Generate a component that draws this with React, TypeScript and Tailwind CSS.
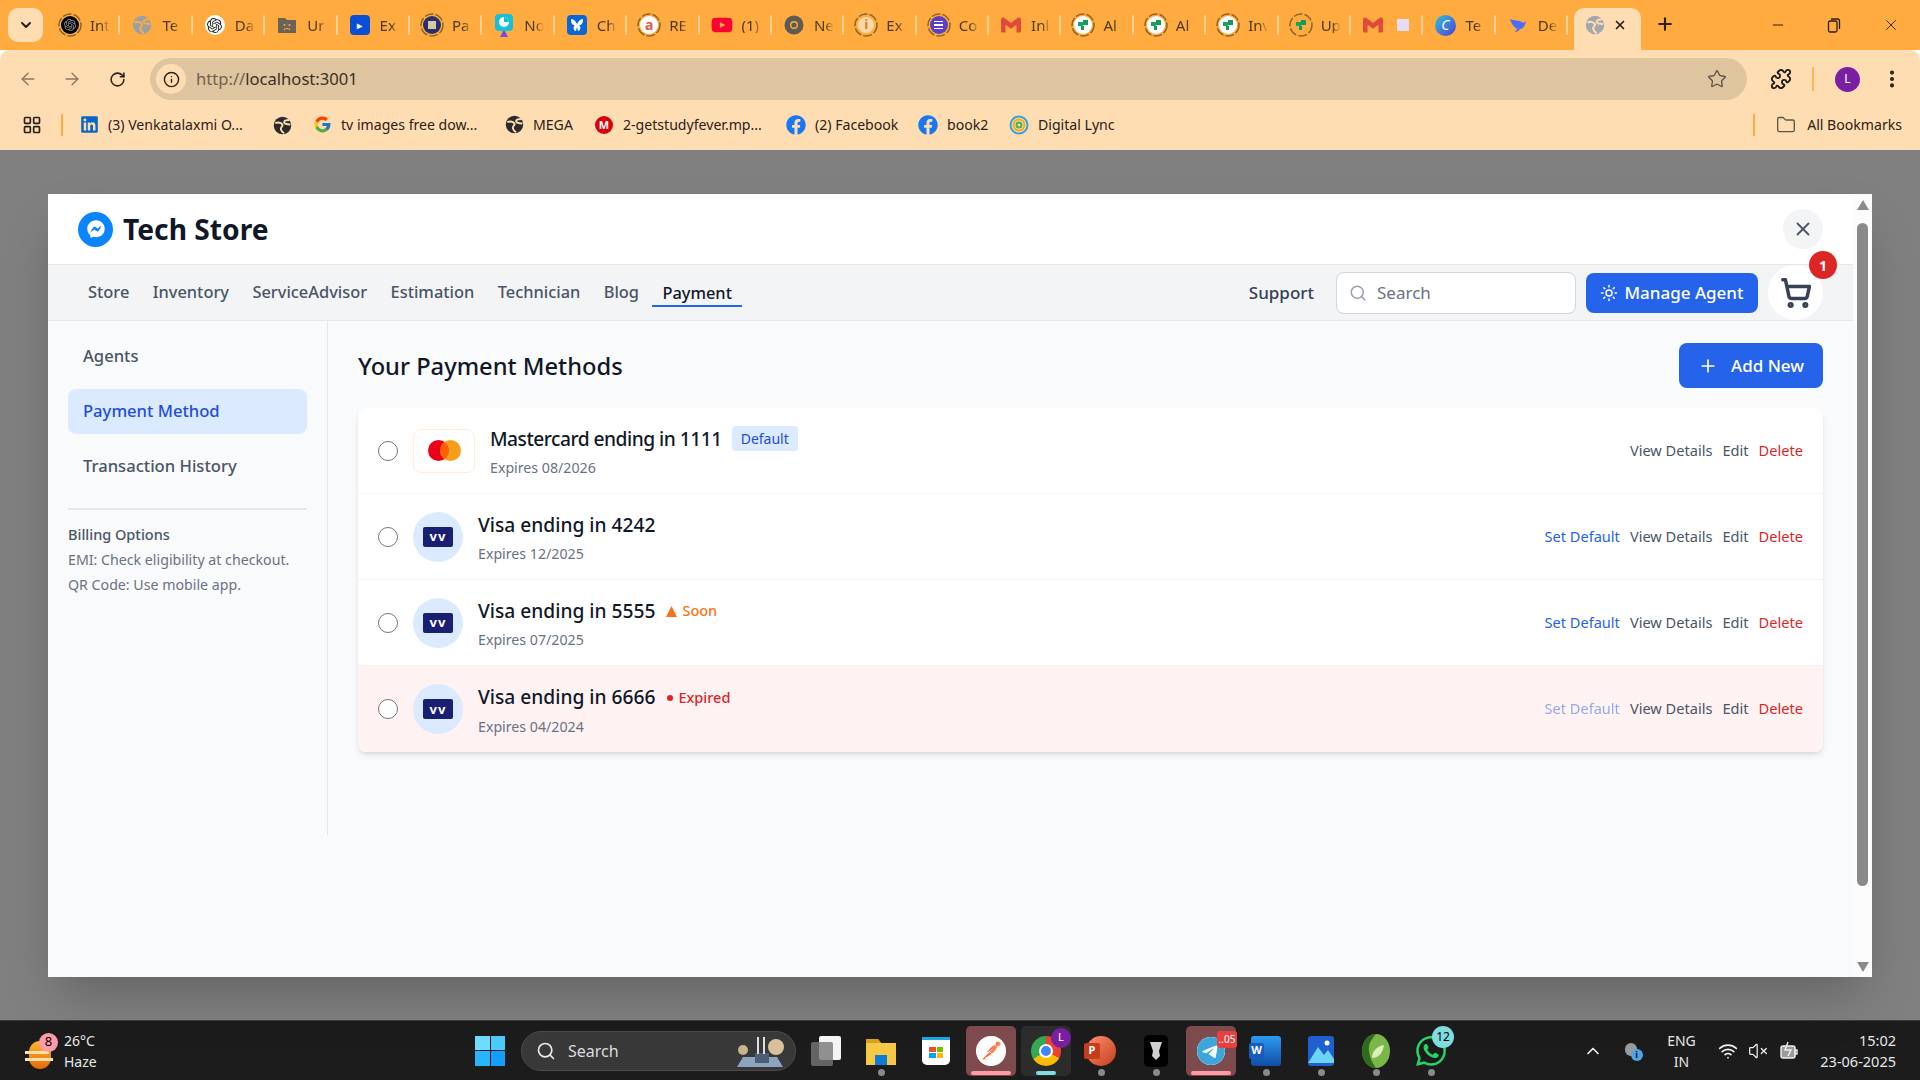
import { ArrowLeft, ArrowRight, ChevronDown, ChevronUp, EllipsisVertical, Folder, Info, LayoutGrid, Minus, Plus, Puzzle, RotateCw, Search, ShoppingCart, Star, Sun, VolumeX, Wifi, X } from "lucide-react";
import { FaFacebook, FaFacebookMessenger, FaLinkedin, FaYoutube } from "react-icons/fa";
import { FcGoogle } from "react-icons/fc";
import { SiGmail, SiOpenai, SiPostman, SiTelegram, SiWhatsapp } from "react-icons/si";

function Globe({ size = 20, color = "#9aa0a6", line = "#ffab40" }: { size?: number; color?: string; line?: string }) {
  return (
    <svg width={size} height={size} viewBox="0 0 24 24">
      <circle cx="12" cy="12" r="11" fill={color} />
      <path d="M3 9c4-2 8 0 9 2s-3 3-2 6 3 4 4 5M21 5c-3 0-7 0-7 3s5 2 8 3" stroke={line} strokeWidth="2.4" fill="none" />
    </svg>
  );
}

function Ring({ children }: { children: React.ReactNode }) {
  return (
    <div className="relative w-[24px] h-[24px] flex items-center justify-center">
      <svg className="absolute inset-0" width="24" height="24" viewBox="0 0 24 24">
        <circle cx="12" cy="12" r="11" fill="none" stroke="#8a6428" strokeWidth="1.5" strokeDasharray="9 2" />
      </svg>
      {children}
    </div>
  );
}

function GreenQuote({ bg = "#fff" }: { bg?: string }) {
  return (
    <div className="w-[18px] h-[18px] rounded-full flex items-center justify-center" style={{ backgroundColor: bg }}>
      <svg width="12" height="12" viewBox="0 0 12 12">
        <rect x="1" y="3" width="5" height="4" fill="#1aa260" />
        <rect x="6" y="1" width="5" height="5" fill="#0f9d58" />
        <rect x="4" y="7" width="3" height="4" fill="#0f9d58" />
      </svg>
    </div>
  );
}

function TabIcon({ kind }: { kind: string }) {
  switch (kind) {
    case "int":
      return (
        <Ring>
          <div className="w-[18px] h-[18px] rounded-full bg-black flex items-center justify-center">
            <SiOpenai size={12} color="#9a9a9a" />
          </div>
        </Ring>
      );
    case "globe":
      return <Globe size={20} />;
    case "gpt":
      return (
        <div className="w-[20px] h-[20px] rounded-full bg-white flex items-center justify-center">
          <SiOpenai size={15} color="#222" />
        </div>
      );
    case "folder":
      return (
        <svg width="20" height="20" viewBox="0 0 20 20">
          <path d="M1 3h7l2 2h9v13H1z" fill="#6b6358" />
          <circle cx="7.5" cy="10" r="1" fill="#ffab40" />
          <circle cx="12.5" cy="10" r="1" fill="#ffab40" />
          <path d="M7 15c1-2 5-2 6 0" stroke="#ffab40" strokeWidth="1.2" fill="none" />
        </svg>
      );
    case "ex":
      return (
        <div className="w-[20px] h-[20px] rounded-[4px] bg-[#0b4fd6] flex items-center justify-center text-white text-[10px] font-bold leading-none">
          ▸
        </div>
      );
    case "pa":
      return (
        <Ring>
          <div className="w-[18px] h-[18px] rounded-full bg-[#27306e] flex items-center justify-center">
            <div className="w-[8px] h-[8px] bg-[#d9c9a0]" />
          </div>
        </Ring>
      );
    case "no":
      return (
        <svg width="20" height="24" viewBox="0 0 20 24">
          <rect x="1" y="1" width="18" height="17" rx="4" fill="#16bfd6" />
          <circle cx="10" cy="9" r="5" fill="#fff" />
          <path d="M10 9V4a5 5 0 0 1 5 5z" fill="#16bfd6" />
          <path d="M6 24l3-6h2l3 6" fill="#7b4de0" />
        </svg>
      );
    case "butterfly":
      return (
        <div className="w-[20px] h-[20px] rounded-[4px] bg-[#0866d6] flex items-center justify-center">
          <svg width="14" height="14" viewBox="0 0 14 14" fill="#fff">
            <path d="M1 1c3 0 5 3 6 5 1-2 3-5 6-5 0 4-1 6-4 6 2 1 2 6-1 6l-1-4-1 4c-3 0-3-5-1-6C2 7 1 5 1 1z" />
          </svg>
        </div>
      );
    case "a":
      return (
        <Ring>
          <div className="w-[18px] h-[18px] rounded-full bg-white flex items-center justify-center text-[#e2574c] text-[14px] font-bold leading-none">
            a
          </div>
        </Ring>
      );
    case "yt":
      return <FaYoutube size={22} color="#ff0033" />;
    case "ne":
      return (
        <svg width="20" height="20" viewBox="0 0 20 20">
          <circle cx="10" cy="10" r="9.5" fill="#5f5a52" />
          <circle cx="10" cy="10" r="4" fill="#ffab40" />
          <circle cx="10" cy="10" r="2.6" fill="#5f5a52" />
        </svg>
      );
    case "i":
      return (
        <Ring>
          <div className="w-[16px] h-[16px] rounded-full bg-[#ffd9a8] flex items-center justify-center text-[#e0701c] text-[12px] font-bold leading-none">
            i
          </div>
        </Ring>
      );
    case "co":
      return (
        <Ring>
          <div className="w-[18px] h-[18px] rounded-full bg-[#5b3fc4] flex flex-col items-center justify-center gap-[2px]">
            <div className="w-[9px] h-[1.5px] bg-white" />
            <div className="w-[9px] h-[1.5px] bg-white" />
            <div className="w-[9px] h-[1.5px] bg-white" />
          </div>
        </Ring>
      );
    case "gmail":
      return <SiGmail size={20} color="#e2483b" />;
    case "quote":
      return (
        <Ring>
          <GreenQuote />
        </Ring>
      );
    case "up":
      return (
        <Ring>
          <GreenQuote bg="transparent" />
        </Ring>
      );
    case "canva":
      return (
        <div className="w-[21px] h-[21px] rounded-full bg-gradient-to-br from-[#19c3d6] to-[#4b2fd6] flex items-center justify-center text-white text-[14px] italic leading-none">
          C
        </div>
      );
    case "deep":
      return (
        <svg width="20" height="20" viewBox="0 0 20 20">
          <path d="M2 4c2 7 6 10 10 10 3 0 5-3 6-8-2 2-3 2-4 1-3-2-8-1-12-3z" fill="#4d6bfe" />
          <path d="M12 14c-1 2-3 3-6 3 2-1 3-2 3-4z" fill="#4d6bfe" />
        </svg>
      );
    default:
      return null;
  }
}

const tabs = [
  ["int", "Int"], ["globe", "Te"], ["gpt", "Da"], ["folder", "Ur"], ["ex", "Ex"], ["pa", "Pa"], ["no", "No"],
  ["butterfly", "Ch"], ["a", "RE"], ["yt", "(1)"], ["ne", "Ne"], ["i", "Ex"], ["co", "Co"], ["gmail", "Inl"],
  ["quote", "Al"], ["quote", "Al"], ["quote", "Inv"], ["up", "Up"], ["mail2", ""], ["canva", "Te"], ["deep", "De"],
];

function TabBar() {
  return (
    <div className="h-[50px] bg-[#ffab40] flex items-start pt-[8px] relative">
      <div className="ml-[8px] w-[35px] h-[34px] rounded-[10px] bg-[#ffddb3] flex items-center justify-center">
        <ChevronDown size={16} strokeWidth={3} color="#2b2118" />
      </div>
      <div className="ml-[5px] flex items-center h-[34px]">
        {tabs.map(([kind, title], i) => (
          <div key={i} className="w-[72.4px] h-[34px] flex items-center pl-[10px] relative">
            <div className="w-[24px] h-[24px] flex items-center justify-center shrink-0">
              {kind === "mail2" ? <TabIcon kind="gmail" /> : <TabIcon kind={kind} />}
            </div>
            {kind === "mail2" ? (
              <div className="ml-[12px] w-[12px] h-[12px] bg-[#e6dcf5]" />
            ) : (
              <div className="ml-[8px] w-[20px] overflow-hidden whitespace-nowrap text-[15px] leading-none text-[#4a3a22] [mask-image:linear-gradient(to_right,black_55%,transparent)]">
                {title}
              </div>
            )}
            <div className="absolute right-0 top-[7px] w-[2px] h-[20px] rounded-full bg-[#ffd08f]" />
          </div>
        ))}
      </div>
      <div className="ml-[6px] w-[67px] h-[42px] rounded-t-[10px] bg-[#ffddb3] flex items-center pl-[11px] gap-[8px] pb-[8px] relative">
        <Globe size={20} color="#a4a8ac" line="#ffddb3" />
        <X size={14} strokeWidth={3} color="#2b2118" />
      </div>
      <Plus className="ml-[14px] mt-[6px]" size={20} strokeWidth={2.5} color="#2b2118" />
      <div className="ml-auto flex items-center h-[34px] text-[#2b2118]">
        <div className="w-[56px] flex justify-center"><Minus size={16} strokeWidth={1.5} /></div>
        <div className="w-[56px] flex justify-center">
          <svg width="14" height="16" viewBox="0 0 14 16" fill="none" stroke="currentColor" strokeWidth="1.3">
            <rect x="1.5" y="4" width="8.5" height="11" rx="1.5" />
            <path d="M4 2h6.5A2 2 0 0 1 12.5 4v8" />
          </svg>
        </div>
        <div className="w-[58px] flex justify-center"><X size={18} strokeWidth={1.2} /></div>
      </div>
    </div>
  );
}

function Toolbar() {
  return (
    <div className="h-[58px] bg-[#ffddb3] rounded-t-[10px] flex items-center text-[#8a7760]">
      <ArrowLeft className="ml-[18px]" size={20} strokeWidth={1.6} />
      <ArrowRight className="ml-[24px]" size={20} strokeWidth={1.6} />
      <RotateCw className="ml-[27px] text-[#2b2118]" size={17} strokeWidth={2.2} />
      <div className="ml-[24px] w-[1597px] h-[42px] rounded-full bg-[#dfc4a0] flex items-center pl-[6px] pr-[20px]">
        <div className="w-[30px] h-[30px] rounded-full bg-[#ffddb3] flex items-center justify-center">
          <Info size={17} strokeWidth={2} color="#2b2118" />
        </div>
        <div className="ml-[10px] text-[16.6px] text-[#6f614d]">
          http://<span className="text-[#3a3024]">localhost:3001</span>
        </div>
        <Star className="ml-auto" size={20} strokeWidth={1.6} color="#5d5548" />
      </div>
      <Puzzle className="ml-[23px]" size={22} strokeWidth={2} color="#1f1a14" />
      <div className="ml-[20px] w-[2px] h-[24px] bg-[#ffb55a]" />
      <div className="ml-[21px] w-[25px] h-[25px] rounded-full bg-[#7b1fa2] text-white text-[12px] flex items-center justify-center">L</div>
      <EllipsisVertical className="ml-[21px]" size={22} strokeWidth={2.5} color="#2b2118" />
    </div>
  );
}

function Bookmark({ icon, label, className }: { icon: React.ReactNode; label?: string; className: string }) {
  return (
    <div className={`flex items-center gap-[9px] shrink-0 ${className}`}>
      <div className="w-[20px] h-[20px] flex items-center justify-center shrink-0">{icon}</div>
      {label && <span className="text-[14.1px] text-[#2b2118] whitespace-nowrap">{label}</span>}
    </div>
  );
}

function Bookmarks() {
  return (
    <div className="h-[42px] bg-[#ffddb3] flex items-center pb-[8px]">
      <LayoutGrid className="ml-[22px]" size={20} strokeWidth={2} color="#2b2118" />
      <div className="ml-[19px] w-[2px] h-[22px] bg-[#ffab40]" />
      <Bookmark className="ml-[16px] w-[193px]" icon={<FaLinkedin size={19} color="#0a66c2" />} label="(3) Venkatalaxmi O..." />
      <Bookmark className="w-[40px]" icon={<Globe size={19} color="#2b2b2b" line="#ffddb3" />} />
      <Bookmark className="w-[192px]" icon={<FcGoogle size={19} />} label="tv images free dow..." />
      <Bookmark className="w-[90px]" icon={<Globe size={19} color="#2b2b2b" line="#ffddb3" />} label="MEGA" />
      <Bookmark className="w-[192px]" icon={<div className="w-[18px] h-[18px] rounded-full bg-[#d90007] text-white text-[11px] font-bold flex items-center justify-center">M</div>} label="2-getstudyfever.mp..." />
      <Bookmark className="w-[132px]" icon={<FaFacebook size={20} color="#1877f2" />} label="(2) Facebook" />
      <Bookmark className="w-[91px]" icon={<FaFacebook size={20} color="#1877f2" />} label="book2" />
      <Bookmark
        icon={
          <svg width="20" height="20" viewBox="0 0 20 20" fill="none" strokeWidth="2">
            <circle cx="10" cy="10" r="8.5" stroke="#3aa0d8" />
            <circle cx="10" cy="10" r="5.5" stroke="#e8b020" />
            <circle cx="10" cy="10" r="2.5" stroke="#4caf50" />
          </svg>
        }
        className=""
        label="Digital Lync"
      />
      <div className="ml-auto w-[2px] h-[22px] bg-[#ffab40]" />
      <Folder className="ml-[21px]" size={20} strokeWidth={1.6} color="#5d5548" />
      <span className="ml-[11px] mr-[18px] text-[14.1px] text-[#2b2118] whitespace-nowrap">All Bookmarks</span>
    </div>
  );
}

const navLinks = ["Store", "Inventory", "ServiceAdvisor", "Estimation", "Technician", "Blog"];

function ModalHeader() {
  return (
    <>
      <div className="h-[71px] bg-white flex items-center pl-[30px] pr-[30px] border-b border-gray-200 shrink-0">
        <div className="w-[35px] h-[35px] rounded-full bg-[#0a84ff] flex items-center justify-center">
          <FaFacebookMessenger size={18} color="#fff" />
        </div>
        <h1 className="ml-[10px] text-[28.2px] font-bold text-gray-900">Tech Store</h1>
        <div className="ml-auto w-[40px] h-[40px] rounded-full bg-gray-100 flex items-center justify-center">
          <X size={22} strokeWidth={2} className="text-gray-600" />
        </div>
      </div>
      <div className="h-[56px] bg-gray-100 border-b border-gray-200 flex items-center pl-[30px] pr-[30px] shrink-0">
        <nav className="flex items-center gap-[3.4px] text-[16.4px] text-gray-600 font-medium">
          {navLinks.map((l) => (
            <span key={l} className="px-[10px]">{l}</span>
          ))}
          <span className="px-[10px] text-gray-900 border-y-2 border-t-transparent border-b-[#2563eb] leading-[24px]">Payment</span>
        </nav>
        <span className="ml-auto text-[17px] font-medium text-gray-700">Support</span>
        <div className="ml-[22px] w-[240px] h-[42px] bg-white border border-gray-300 rounded-lg flex items-center pl-[12px] gap-[10px]">
          <Search size={18} className="text-gray-400" />
          <span className="text-[17px] text-gray-500">Search</span>
        </div>
        <button className="ml-[10px] w-[172px] h-[40px] bg-[#2563eb] rounded-lg text-white text-[17px] font-medium flex items-center justify-center gap-[6px]">
          <Sun size={18} />
          Manage Agent
        </button>
        <div className="ml-[10px] w-[55px] h-[55px] rounded-full bg-white flex items-center justify-center relative">
          <ShoppingCart size={32} strokeWidth={2.6} className="text-gray-700" />
          <div className="absolute -top-[14px] -right-[14px] w-[28px] h-[28px] rounded-full bg-[#dc2626] text-white text-[14px] font-bold flex items-center justify-center">1</div>
        </div>
      </div>
    </>
  );
}

function Sidebar() {
  return (
    <aside className="w-[280px] h-[514px] border-r border-gray-200 px-[20px] pt-[13px] shrink-0">
      <div className="flex flex-col gap-[10px]">
        <div className="h-[45px] flex items-center px-[15px] text-[16.6px] font-medium text-gray-600">Agents</div>
        <div className="h-[45px] flex items-center px-[15px] text-[16.6px] font-medium text-[#1d4ed8] bg-blue-100 rounded-lg">Payment Method</div>
        <div className="h-[45px] flex items-center px-[15px] text-[16.6px] font-medium text-gray-600">Transaction History</div>
      </div>
      <div className="mt-[19px] pt-[12px] border-t-2 border-gray-200 text-[14.2px] text-gray-500">
        <div className="font-medium text-[14.5px] text-gray-600 leading-[25px]">Billing Options</div>
        <div className="leading-[25px]">EMI: Check eligibility at checkout.</div>
        <div className="leading-[25px]">QR Code: Use mobile app.</div>
      </div>
    </aside>
  );
}

function VisaBadge() {
  return (
    <div className="w-[50px] h-[50px] rounded-full bg-blue-100 flex items-center justify-center">
      <div className="w-[30px] h-[20px] rounded-[2px] bg-[#1a1f71] text-white text-[13px] font-bold leading-none tracking-[1px] flex items-center justify-center">vv</div>
    </div>
  );
}

function MastercardBadge() {
  return (
    <div className="w-[62px] h-[44px] rounded-lg bg-white border border-orange-100 flex items-center justify-center">
      <svg width="33" height="21" viewBox="0 0 33 21">
        <circle cx="10.5" cy="10.5" r="10.5" fill="#eb001b" />
        <circle cx="22.5" cy="10.5" r="10.5" fill="#f79e1b" />
        <path d="M16.5 1.9a10.5 10.5 0 0 1 0 17.2a10.5 10.5 0 0 1 0-17.2z" fill="#ff5f00" />
      </svg>
    </div>
  );
}

type Method = { title: string; expires: string; tag?: "default" | "soon" | "expired"; mastercard?: boolean };

const methods: Method[] = [
  { title: "Mastercard ending in 1111", expires: "Expires 08/2026", tag: "default", mastercard: true },
  { title: "Visa ending in 4242", expires: "Expires 12/2025" },
  { title: "Visa ending in 5555", expires: "Expires 07/2025", tag: "soon" },
  { title: "Visa ending in 6666", expires: "Expires 04/2024", tag: "expired" },
];

function MethodRow({ m, last }: { m: Method; last: boolean }) {
  return (
    <div className={`h-[86px] flex items-center pl-[20px] pr-[20px] ${last ? "bg-[#fef2f2]" : "border-b border-gray-100"}`}>
      <div className="w-[20px] h-[20px] rounded-full border-[1.5px] border-[#767676] bg-white shrink-0" />
      <div className="ml-[15px] shrink-0">{m.mastercard ? <MastercardBadge /> : <VisaBadge />}</div>
      <div className="ml-[15px] mt-[4px]">
        <div className="flex items-center h-[28px]">
          <span className={`text-[19.2px] font-medium text-gray-900 ${m.mastercard ? "tracking-[-0.5px]" : ""}`}>{m.title}</span>
          {m.tag === "default" && <span className="ml-[10px] -mt-[2px] h-[25px] px-[9px] rounded bg-blue-100 text-[#1d4ed8] text-[14px] flex items-center">Default</span>}
          {m.tag === "soon" && (
            <span className="ml-[11px] text-[14.5px] font-medium text-[#f97316] flex items-center gap-[5px]">
              <svg width="11" height="11" viewBox="0 0 11 11"><path d="M5.5 0L11 11H0z" fill="currentColor" /></svg>
              Soon
            </span>
          )}
          {m.tag === "expired" && (
            <span className="ml-[12px] text-[14.5px] font-medium text-[#dc2626] flex items-center gap-[5px]">
              <span className="w-[6px] h-[6px] rounded-full bg-[#dc2626]" />
              Expired
            </span>
          )}
        </div>
        <div className="mt-[3px] text-[14.2px] leading-[24px] text-gray-500">{m.expires}</div>
      </div>
      <div className="ml-auto flex items-center gap-[10px] text-[14.6px] text-gray-600">
        {!m.tag || m.tag === "soon" ? <span className="text-[#2563eb]">Set Default</span> : null}
        {m.tag === "expired" ? <span className="text-[#2563eb] opacity-50">Set Default</span> : null}
        <span>View Details</span>
        <span>Edit</span>
        <span className="text-[#dc2626]">Delete</span>
      </div>
    </div>
  );
}

function Scrollbar() {
  return (
    <div className="absolute top-0 right-0 bottom-0 w-[19px] bg-[#fcfcfc] flex flex-col items-center pt-[6px]">
      <svg width="12" height="10" viewBox="0 0 12 10"><path d="M6 0l6 10H0z" fill="#8a8a8a" /></svg>
      <div className="mt-[13px] w-[11px] h-[663px] rounded-full bg-[#8a8a8a]" />
      <svg className="mt-[76px]" width="12" height="10" viewBox="0 0 12 10"><path d="M6 10L0 0h12z" fill="#8a8a8a" /></svg>
    </div>
  );
}

function Modal() {
  return (
    <div className="w-[1824px] h-[783px] bg-gray-50 shadow-2xl relative pr-[19px] flex flex-col">
      <ModalHeader />
      <div className="flex">
        <Sidebar />
        <main className="flex-1 pl-[30px] pr-[30px] pt-[22px]">
          <div className="flex items-center justify-between h-[45px]">
            <h2 className="pt-[3px] text-[23.7px] font-medium text-gray-900">Your Payment Methods</h2>
            <button className="w-[144px] h-[45px] rounded-lg bg-[#2563eb] text-white text-[17px] font-medium flex items-center justify-center gap-[13px]">
              <Plus size={20} />
              Add New
            </button>
          </div>
          <div className="mt-[20px] rounded-lg bg-white shadow-md overflow-hidden">
            {methods.map((m, i) => (
              <MethodRow key={m.title} m={m} last={i === methods.length - 1} />
            ))}
          </div>
        </main>
      </div>
      <Scrollbar />
    </div>
  );
}

function TaskIcon({ children, bg, bar, dot }: { children: React.ReactNode; bg?: string; bar?: string; dot?: boolean }) {
  return (
    <div className="w-[55px] h-[60px] flex items-center justify-center relative">
      {bg && <div className={`absolute left-[2px] top-[5px] w-[50px] h-[50px] rounded-[5px] ${bg}`} />}
      <div className="relative">{children}</div>
      {bar && <div className={`absolute bottom-[6px] h-[4px] rounded-full ${bar}`} />}
      {dot && <div className="absolute bottom-[5px] left-[24px] w-[7px] h-[7px] rounded-full bg-[#8a8a8a]" />}
    </div>
  );
}

function Taskbar() {
  return (
    <div className="h-[60px] bg-[#1c1c1c] border-t border-[#3a3a3a] flex items-center text-white">
      <div className="ml-[25px] w-[30px] h-[36px] relative">
        <div className="absolute left-[4px] top-[8px] w-[22px] h-[28px] rounded-full bg-gradient-to-b from-[#ffb627] to-[#e56b0a]" />
        <div className="absolute left-0 top-[18px] w-[24px] h-[3px] bg-[#ffe0a8]" />
        <div className="absolute left-0 top-[25px] w-[28px] h-[3px] bg-[#ffe0a8]" />
        <div className="absolute left-[14px] top-[0px] w-[19px] h-[19px] rounded-full bg-[#ff9aa8] text-black text-[13px] flex items-center justify-center">8</div>
      </div>
      <div className="ml-[9px] text-[14px] leading-[21px] w-[60px] text-[#e8e8e8]">
        <div>26°C</div>
        <div>Haze</div>
      </div>
      <div className="ml-[351px] w-[30px] h-[30px] grid grid-cols-2 gap-[1px]">
        <div className="bg-[#6fdcfd]" />
        <div className="bg-[#4ccbfb]" />
        <div className="bg-[#28b5fa]" />
        <div className="bg-[#129efa]" />
      </div>
      <div className="ml-[16px] w-[275px] h-[40px] rounded-full bg-[#383838] border border-[#4c4c4c] flex items-center pl-[14px] relative">
        <Search size={20} color="#e8e8e8" />
        <span className="ml-[12px] text-[16px] text-[#dcdcdc]">Search</span>
        <svg className="absolute right-[10px] top-[3px]" width="50" height="33" viewBox="0 0 50 33">
          <path d="M2 32l6-10h34l6 10z" fill="#8ea3bf" />
          <rect x="20" y="18" width="14" height="10" fill="#4d5d75" />
          <circle cx="8" cy="15" r="5" fill="#c9b48c" />
          <circle cx="41" cy="12" r="8" fill="#d8c19a" />
          <rect x="22" y="2" width="2" height="17" fill="#ddd" />
          <rect x="28" y="2" width="2" height="17" fill="#ddd" />
        </svg>
      </div>
      <div className="ml-[2.5px] flex items-center">
        <TaskIcon>
          <div className="w-[30px] h-[30px] relative">
            <div className="absolute right-0 top-0 w-[22px] h-[24px] bg-[#f4f4f4] rounded-[2px]" />
            <div className="absolute left-0 bottom-0 w-[22px] h-[24px] bg-[#777]/80 rounded-[2px]" />
          </div>
        </TaskIcon>
        <TaskIcon dot>
          <svg width="30" height="28" viewBox="0 0 30 28">
            <path d="M0 2h12l3 4h15v22H0z" fill="#f6c944" />
            <path d="M0 2h12l3 4H0z" fill="#d9a019" />
            <rect x="9" y="18" width="12" height="10" fill="#0f7ad8" />
          </svg>
        </TaskIcon>
        <TaskIcon>
          <div className="w-[28px] h-[28px] rounded-b-[5px] bg-white border-t-[3px] border-[#1aa7e0] grid grid-cols-2 gap-[1px] p-[7px]">
            <div className="bg-[#f25022]" />
            <div className="bg-[#7fba00]" />
            <div className="bg-[#00a4ef]" />
            <div className="bg-[#ffb900]" />
          </div>
        </TaskIcon>
        <TaskIcon bg="bg-[#7d4a4e]" bar="bg-[#ff9aa8] left-[7px] w-[40px]">
          <div className="w-[30px] h-[30px] rounded-full bg-[#ff6c37] flex items-center justify-center">
            <SiPostman size={30} color="#fff" />
          </div>
        </TaskIcon>
        <TaskIcon bg="bg-[#2c2c2c]" bar="bg-[#7fdde0] left-[17px] w-[20px]">
          <div className="w-[30px] h-[30px] rounded-full bg-[conic-gradient(#ea4335_0_33%,#fbbc05_33%_66%,#34a853_66%)] flex items-center justify-center">
            <div className="w-[14px] h-[14px] rounded-full bg-[#4285f4] border-2 border-white" />
          </div>
          <div className="absolute -top-[8px] -right-[10px] w-[20px] h-[20px] rounded-full bg-[#7b1fa2] text-[11px] flex items-center justify-center">L</div>
        </TaskIcon>
        <TaskIcon dot>
          <div className="w-[30px] h-[30px] rounded-full bg-gradient-to-br from-[#ff8f6b] to-[#c43e1c] flex items-center">
            <div className="w-[16px] h-[16px] -ml-[2px] rounded-[2px] bg-[#c43e1c] text-white text-[11px] font-bold flex items-center justify-center">P</div>
          </div>
        </TaskIcon>
        <TaskIcon dot>
          <div className="w-[24px] h-[32px] rounded-[5px] bg-black flex items-center justify-center">
            <svg width="12" height="18" viewBox="0 0 12 18"><path d="M0 0h12L9 9l1 5-4 4-4-4 1-5z" fill="#d0d0d0" /></svg>
          </div>
        </TaskIcon>
        <TaskIcon bg="bg-[#7d4a4e]" bar="bg-[#ff9aa8] left-[7px] w-[40px]">
          <div className="w-[28px] h-[28px] rounded-full bg-[#3aa6dc] flex items-center justify-center">
            <SiTelegram size={28} color="#3aa6dc" className="bg-white rounded-full" />
          </div>
          <div className="absolute -top-[6px] -right-[12px] w-[20px] h-[17px] rounded-[3px] bg-[#e8403f] text-[10px] flex items-center justify-center">..05</div>
        </TaskIcon>
        <TaskIcon dot>
          <div className="w-[30px] h-[30px] rounded-[3px] bg-gradient-to-b from-[#2b9bf0] to-[#134da6] relative">
            <div className="absolute -left-[2px] top-[7px] w-[15px] h-[16px] rounded-[2px] bg-[#185abd] text-white text-[11px] font-bold flex items-center justify-center">W</div>
          </div>
        </TaskIcon>
        <TaskIcon dot>
          <svg width="26" height="30" viewBox="0 0 26 30">
            <rect width="26" height="30" rx="3" fill="#1f5fd0" />
            <path d="M0 27l10-16 6 8 4-5 6 9v4H0z" fill="#6dd3f7" />
            <circle cx="19" cy="7" r="2.5" fill="#fff" />
          </svg>
        </TaskIcon>
        <TaskIcon dot>
          <svg width="30" height="34" viewBox="0 0 30 34">
            <ellipse cx="15" cy="17" rx="14" ry="17" fill="#7ab648" />
            <path d="M1 17C1 7 7 0 15 0c-4 5-8 9-7 17s4 13 7 17C7 34 1 27 1 17z" fill="#2f6b1f" />
            <path d="M11 24c0-8 6-12 12-13-1 7-5 13-12 13z" fill="#d9f0b8" />
          </svg>
        </TaskIcon>
        <TaskIcon dot>
          <SiWhatsapp size={30} color="#25d366" />
          <div className="absolute -top-[10px] -right-[8px] w-[22px] h-[22px] rounded-full bg-[#7fdde0] text-black text-[12px] flex items-center justify-center">12</div>
        </TaskIcon>
      </div>
      <ChevronUp className="ml-[124px]" size={20} strokeWidth={2} color="#f0f0f0" />
      <div className="ml-[20px] w-[20px] h-[20px] relative">
        <div className="absolute left-[2px] top-[2px] w-[12px] h-[13px] rounded-full bg-[#9a9a9a]" />
        <div className="absolute right-0 bottom-0 w-[12px] h-[12px] rounded-full bg-[#4aa8ea] text-[9px] text-black font-bold flex items-center justify-center">i</div>
      </div>
      <div className="ml-[20px] w-[38px] text-center text-[14px] leading-[21px] text-[#e8e8e8]">
        <div>ENG</div>
        <div>IN</div>
      </div>
      <Wifi className="ml-[17px]" size={20} color="#f0f0f0" />
      <VolumeX className="ml-[10px]" size={20} strokeWidth={1.5} color="#f0f0f0" />
      <svg className="ml-[11px]" width="20" height="20" viewBox="0 0 20 20" fill="none" stroke="#f0f0f0" strokeWidth="1.4">
        <rect x="2" y="5" width="14" height="12" rx="2" fill="#f0f0f0" fillOpacity="0.6" />
        <rect x="16" y="9" width="2" height="4" />
        <path d="M9 1L6 9h6l-3 6" />
      </svg>
      <div className="ml-auto mr-[24px] text-right text-[14.5px] leading-[21px] text-[#e8e8e8]">
        <div>15:02</div>
        <div>23-06-2025</div>
      </div>
    </div>
  );
}

export default function App() {
  return (
    <div className="w-[1920px] h-[1080px] flex flex-col overflow-hidden font-['Noto_Sans',sans-serif]">
      <TabBar />
      <Toolbar />
      <Bookmarks />
      <div className="flex-1 bg-[#808080] pl-[48px] pt-[44px]">
        <Modal />
      </div>
      <Taskbar />
    </div>
  );
}
